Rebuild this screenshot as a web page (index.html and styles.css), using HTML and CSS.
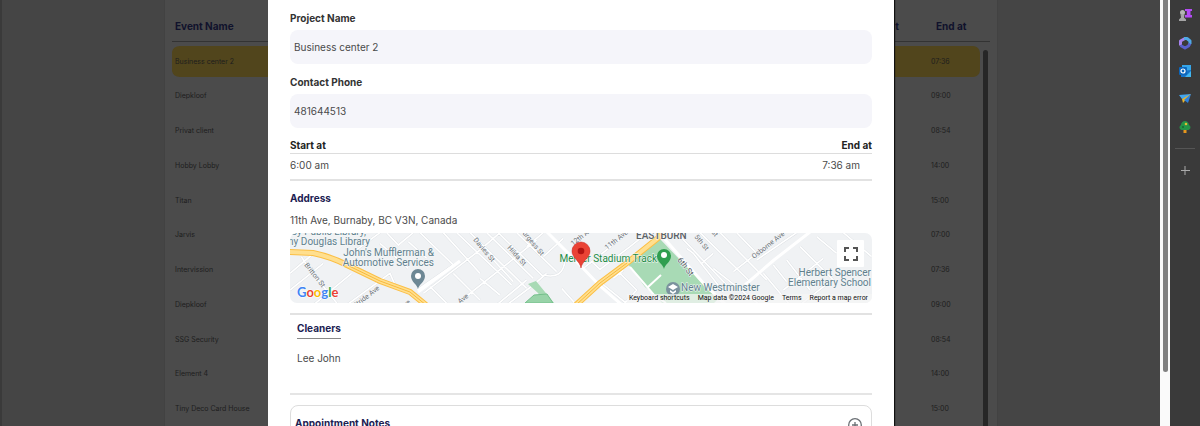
FILE: index.html
```
<!DOCTYPE html>
<html lang="en">
<head>
<meta charset="utf-8">
<title>Appointment details</title>
<link rel="stylesheet" href="styles.css">
</head>
<body>
<div class="page">
  <section class="schedule">
    <table class="events">
      <colgroup><col><col class="col-start"><col class="col-end"></colgroup>
      <thead>
        <tr><th>Event Name</th><th>Start at</th><th>End at</th></tr>
      </thead>
      <tbody>
        <tr class="selected"><td>Business center 2</td><td></td><td>07:36</td></tr>
        <tr><td>Diepkloof</td><td></td><td>09:00</td></tr>
        <tr><td>Privat client</td><td></td><td>08:54</td></tr>
        <tr><td>Hobby Lobby</td><td></td><td>14:00</td></tr>
        <tr><td>Titan</td><td></td><td>15:00</td></tr>
        <tr><td>Jarvis</td><td></td><td>07:00</td></tr>
        <tr><td>Intervission</td><td></td><td>07:36</td></tr>
        <tr><td>Diepkloof</td><td></td><td>09:00</td></tr>
        <tr><td>SSG Security</td><td></td><td>08:54</td></tr>
        <tr><td>Element 4</td><td></td><td>14:00</td></tr>
        <tr><td>Tiny Deco Card House</td><td></td><td>15:00</td></tr>
      </tbody>
    </table>
    <div class="list-scroll"></div>
  </section>

  <div class="overlay">
    <main class="modal">
      <label class="label" for="project">Project Name</label>
      <input class="field" id="project" type="text" value="Business center 2" readonly>
      <label class="label" for="phone">Contact Phone</label>
      <input class="field" id="phone" type="text" value="481644513" readonly>

      <div class="times-head"><span>Start at</span><span>End at</span></div>
      <div class="times"><span>6:00 am</span><span>7:36 am</span></div>

      <section class="address">
        <h2 class="title">Address</h2>
        <p class="text">11th Ave, Burnaby, BC V3N, Canada</p>
        <div class="map">
          <svg class="map-canvas" viewBox="0 0 582 70" preserveAspectRatio="xMidYMid slice" role="img" aria-label="Map">
            <defs>
              <g id="streets-west" transform="translate(-10 -23) scale(.33333)">
                <path d="M30 190L95 135M30 240L130 160M64 140L90 180L175 285M100 285L215 190M200 285L330 190L345 225M300 68L215 130M320 68L355 105L400 68M300 100L385 175M385 95L440 145M420 68L520 165L412 240M490 68L600 190M530 68L695 225M570 68L740 235M430 250L600 120L660 68M450 230L500 280M520 190L600 270M545 270L690 155L770 90M600 205L660 255M640 150L700 215M650 285L740 210M680 285L760 225L800 190M620 68L760 205M655 68L790 200M710 68L830 185M740 110L790 68M790 140L850 85M790 195Q850 210 855 150M845 235L885 280"/>
              </g>
              <g id="streets-east" transform="translate(280 -23) scale(.33333)">
                <path d="M40 175L65 155L90 178L180 110L230 70M60 160L165 75M95 220L175 285M140 180L200 240L160 285M130 205L160 180M320 68L470 225M350 115L370 130L460 245M390 68L535 210M450 68L590 210M500 68L560 130M395 160L430 130M490 185L640 68M560 150L680 68M610 165L650 215M640 240L760 145M650 150L720 240M690 110L800 220M740 80L800 130M430 175L570 285M580 190L660 285M690 285L780 215M820 68L905 140"/>
              </g>
            </defs>
            <rect width="582" height="70" fill="#f0f2f4"/>
            <g class="casing"><use href="#streets-west"/><use href="#streets-east"/></g>
            <g class="streets"><use href="#streets-west"/><use href="#streets-east"/></g>
            <path d="M338 31L370 6L415 53L430 64L424 70H372L364 61L355 54Z" fill="#a8dab5"/>
            <path d="M358 54L371 42M340 34L364 62L376 70" stroke="#fff" stroke-width="2" fill="none"/>
            <path d="M238 51L246 48L264 70H254L248 60Z" fill="#a8dab5"/>
            <path d="M235 70L244 62L257 61L263 70Z" fill="#98d3a8" stroke="#74bf8b" stroke-width="1"/>
            <path d="M257 -1L290 32L309 52L332 72M373 4L415 52L436 72M455 52L484 27L520 -1M128 59L170 28" stroke="#fff" stroke-width="3" fill="none"/>
            <g fill="none">
              <path d="M-2 19L23 20Q42 24 57 32L90 48L120 59L136 72M286 72L310 50L337 30L368 5L374 -2" stroke="#fbbf45" stroke-width="6"/>
              <path d="M-2 19L23 20Q42 24 57 32L90 48L120 59L136 72M286 72L310 50L337 30L368 5L374 -2" stroke="#ffdf8f" stroke-width="4"/>
              <path d="M57 32L90 48L120 59L136 72M286 72L310 50L337 30" stroke="#f7b93c" stroke-width="1"/>
            </g>
            <g class="road">
              <text transform="translate(14 32) rotate(52)">Britton St</text>
              <text transform="translate(183 7) rotate(50)">Davies St</text>
              <text transform="translate(217 15) rotate(48)">Hilda St</text>
              <text transform="translate(251 23) rotate(50)" text-anchor="end">Burgess St</text>
              <text transform="translate(283 13) rotate(-38)">12th Ave</text>
              <text transform="translate(90 56) rotate(-38)" text-anchor="end">Stride Ave</text>
              <text transform="translate(170 71) rotate(-38)">Ave</text>
              <text transform="translate(121 70) rotate(-38)" text-anchor="end">19th Ave</text>
              <text transform="translate(317 17) rotate(-38)">11th Ave</text>
              <text transform="translate(404 4) rotate(50)">5th St</text>
              <text transform="translate(425 4) rotate(50)" text-anchor="end">4th St</text>
              <text transform="translate(464 26) rotate(-38)">Osborne Ave</text>
              <text class="major" transform="translate(387 27) rotate(52)">6th St</text>
            </g>
            <g class="place">
              <text x="76" y="2" text-anchor="end">Burnaby Public Library,</text>
              <text x="80" y="12" text-anchor="end">Tommy Douglas Library</text>
              <text x="144" y="23" text-anchor="end">John's Mufflerman &amp;</text>
              <text x="144" y="33" text-anchor="end">Automotive Services</text>
              <text x="391" y="58">New Westminster</text>
              <text x="581" y="43" text-anchor="end">Herbert Spencer</text>
              <text x="581" y="53" text-anchor="end">Elementary School</text>
            </g>
            <text class="district" x="346" y="6">EASTBURN</text>
            <text class="park" x="367" y="29" text-anchor="end">Mercer Stadium Track</text>
            <path d="M128 56C127 51 121 49 121 43A7 7 0 0 1 135 43C135 49 129 51 128 56Z" fill="#6d8794"/>
            <circle cx="128" cy="43" r="3" fill="#fff"/>
            <path d="M374 36C373 31 367 29 367 23A7 7 0 0 1 381 23C381 29 375 31 374 36Z" fill="#2f9e4f"/>
            <circle cx="374" cy="22" r="3" fill="#fff"/>
            <circle cx="383" cy="56" r="7" fill="#7b929e"/>
            <path d="M378 54L383 51L388 54L383 57ZM380 57L383 59L386 57V59L383 61L380 59Z" fill="#fff"/>
            <path d="M291 35C290 28 282 25 282 18A9 9 0 0 1 300 18C300 25 292 28 291 35Z" fill="#ea4335" stroke="#c5221f" stroke-width=".5"/>
            <circle cx="291" cy="18" r="3.3" fill="#b31412"/>
            <text class="logo" x="7" y="64"><tspan fill="#4285f4">G</tspan><tspan fill="#ea4335">o</tspan><tspan fill="#fbbc04">o</tspan><tspan fill="#4285f4">g</tspan><tspan fill="#34a853">l</tspan><tspan fill="#ea4335">e</tspan></text>
          </svg>
          <button class="fullscreen" type="button" aria-label="Toggle fullscreen">
            <svg width="14" height="14" viewBox="0 0 14 14"><path d="M1 5V1H5M9 1H13V5M13 9V13H9M5 13H1V9" fill="none" stroke="#555" stroke-width="2"/></svg>
          </button>
          <div class="credits">
            <button type="button">Keyboard shortcuts</button>
            <span>Map data ©2024 Google</span>
            <a href="#terms">Terms</a>
            <a href="#report">Report a map error</a>
          </div>
        </div>
      </section>

      <section class="cleaners">
        <h2 class="title underlined">Cleaners</h2>
        <p class="text">Lee John</p>
      </section>

      <section class="notes">
        <h2 class="title">Appointment Notes</h2>
        <button class="add" type="button" aria-label="Add note">
          <svg width="16" height="16" viewBox="0 0 16 16" fill="none" stroke="#6b7075"><circle cx="8" cy="8" r="6.3" stroke-width="1.3"/><path d="M8 5V11M5 8H11" stroke-width="1.3"/></svg>
        </button>
      </section>
    </main>
  </div>
</div>

<div class="page-scroll"><div class="thumb"></div></div>

<aside class="apps">
  <button type="button" aria-label="Games"><svg viewBox="0 0 14 14"><path d="M7 1H14V3H12.500V7H14V9.500H7V7H8.800V3H7Z" fill="#b44cf5"/><circle cx="4.500" cy="4.500" r="2.500" fill="#b5b5b5"/><path d="M2.500 6.500H6.500L6 9.500L8 11.500V13H1V11.500L3 9.500Z" fill="#a5a5a5"/></svg></button>
  <button type="button" aria-label="Microsoft 365"><svg viewBox="0 0 14 14"><path d="M2.500 9.500V5L7 2.500" fill="none" stroke="#a783ee" stroke-width="3" stroke-linejoin="round"/><path d="M6 2.500H9L12 5V8" fill="none" stroke="#4fa9e6" stroke-width="3" stroke-linejoin="round"/><path d="M12 7.500L10.500 10L7 12L2.500 9.500" fill="none" stroke="#5960cc" stroke-width="3" stroke-linejoin="round"/></svg></button>
  <button type="button" aria-label="Outlook"><svg viewBox="0 0 14 14"><path d="M4 1H13V8H4Z" fill="#35a5e8"/><path d="M3 7L13 6V13H3Z" fill="#1673c9"/><path d="M13 7L7 13H13Z" fill="#42b7f1"/><rect x="1" y="3" width="8" height="8" rx="1" fill="#0b66bd"/><circle cx="5" cy="7" r="2" fill="none" stroke="#fff" stroke-width="1.200"/></svg></button>
  <button type="button" aria-label="Drop"><svg viewBox="0 0 14 14"><path d="M1 3L13 2L9 6L4 7Z" fill="#43a6ef"/><path d="M13 2L4 7L5 11Z" fill="#e9b52f"/><path d="M13 2L6 8L10 11Z" fill="#2d82df"/></svg></button>
  <button type="button" aria-label="E-tree"><svg viewBox="0 0 14 14"><path d="M5.500 9H8.500V13H5.500Z" fill="#e6961d"/><path d="M7 1C10 1 11 4 11 5C14 7 12 10.500 9 10H5C2 10.500 0 7 3 5C3 4 4 1 7 1Z" fill="#249447"/><circle cx="8" cy="4" r="1.300" fill="#e1bd32"/><circle cx="5" cy="7" r="1" fill="#126b32"/></svg></button>
  <hr>
  <button type="button" aria-label="Add app"><svg viewBox="0 0 14 14"><path d="M7 3V12M3 7.500H12" stroke="#aaa" stroke-width="1"/></svg></button>
</aside>
</body>
</html>
```
FILE: styles.css
```
* { box-sizing: border-box; }

body {
  margin: 0;
  height: 100vh;
  display: flex;
  overflow: hidden;
  background: #454545;
  color: #4a4a4a;
  font: 10px/16px Inter, "Liberation Sans", sans-serif;
}

h2, p { margin: 0; font-size: 10px; }
button { padding: 0; border: 0; background: none; font: inherit; color: inherit; }
svg { display: block; }

/* Dimmed schedule behind the dialog */
.page {
  position: relative;
  flex: 1;
  overflow: hidden;
  border-left: 2px solid #3a3a3a;
}

.schedule {
  position: relative;
  max-width: 834px;
  margin: 0 auto;
  padding: 10px 7px;
  background: #4b4b4b;
  border: solid #424242;
  border-width: 0 1px;
}

.events {
  width: 100%;
  table-layout: fixed;
  border-spacing: 0;
  text-align: left;
  color: #1d1d1d;
  font-size: 7px;
  line-height: 12px;
}

.col-start { width: 60px; }
.col-end { width: 70px; }

.events th {
  height: 32px;
  padding: 0 3px;
  border-bottom: 1px solid #333;
  color: #10122c;
  font-size: 10px;
}

.events th:last-child { padding-left: 16px; }

.events tbody::before { content: ""; display: block; height: 2px; }

.events td {
  height: 35px;
  padding: 0 3px;
  border: solid transparent;
  border-width: 2px 0;
  background-clip: padding-box;
}

.events tr:nth-child(4n + 2) td { height: 34px; }
.events td:last-child { padding-left: 11px; border-right-width: 10px; }
.selected td { background-color: #51451c; }
.selected td:first-child { border-radius: 8px 0 0 8px; }
.selected td:last-child { border-radius: 0 17px 17px 0 / 0 9px 9px 0; }

.list-scroll {
  position: absolute;
  top: 50px;
  right: 9px;
  bottom: 0;
  width: 5px;
  border-radius: 3px;
  background: #262626;
}

/* Dialog */
.overlay {
  position: absolute;
  inset: 0;
  display: flex;
  justify-content: center;
  align-items: flex-start;
}

.modal {
  width: 100%;
  max-width: 626px;
  min-height: 100%;
  padding: 10px 22px;
  background: #fff;
  box-shadow: 1px 0 1px #111;
}

.label { display: block; color: #333; font-weight: 700; }

.field {
  display: block;
  width: 100%;
  height: 34px;
  margin: 4px 0 10px;
  padding: 0 4px;
  border: 0;
  border-radius: 8px;
  outline: 0;
  background: #f5f5fa;
  color: #4a4a4a;
  font: inherit;
}

.times-head, .times { display: flex; justify-content: space-between; }
.times-head { border-bottom: 1px solid #ddd; color: #222; font-weight: 700; line-height: 15px; }
.times { padding: 3px 12px 6px 0; border-bottom: 2px solid #e2e2e2; }

.title { color: #1c2152; font-weight: 700; }

.address {
  display: flex;
  flex-direction: column;
  padding: 9px 0 10px;
  border-bottom: 2px solid #e2e2e2;
}

.address .text { margin: 6px 0 5px; }

.map {
  position: relative;
  height: 70px;
  overflow: hidden;
  border-radius: 7px;
  font-family: Roboto, sans-serif;
}

.map-canvas { width: 100%; height: 100%; }
.casing, .streets { fill: none; }
.casing { stroke: #d9dde1; stroke-width: 7px; }
.streets { stroke: #fff; stroke-width: 5px; }

.map text { paint-order: stroke; stroke: #f6f8f9; stroke-width: 1px; font-size: 10px; }
.map .road text { fill: #6a7076; font-size: 7px; }
.map .road .major { fill: #50565b; font-size: 8px; }
.place { fill: #607f8d; }
.district { fill: #5c6267; font-weight: 500; }
.park { fill: #238b45; }
.map .logo { font-family: Lato, sans-serif; font-size: 13px; font-weight: 700; stroke: #fff; }

.fullscreen {
  position: absolute;
  top: 7px;
  right: 8px;
  width: 27px;
  height: 27px;
  display: grid;
  place-items: center;
  border-radius: 1px;
  background: #fff;
}

.credits {
  position: absolute;
  right: 0;
  bottom: 0;
  display: flex;
  gap: 8px;
  padding: 0 4px 0 2px;
  background: #f5f5f5b8;
  color: #111;
  font-size: 7px;
  line-height: 9px;
}

.credits a { color: inherit; text-decoration: none; }

.cleaners {
  display: flex;
  flex-direction: column;
  align-items: flex-start;
  gap: 11px;
  padding: 5px 7px 27px;
  border-bottom: 2px solid #e5e5e5;
}

.underlined { padding-bottom: 2px; border-bottom: 1px solid #888; }

.notes {
  display: flex;
  justify-content: space-between;
  align-items: flex-start;
  margin-top: 10px;
  padding: 9px 8px 60px 4px;
  border: 1px solid #ddd;
  border-radius: 8px;
}

.add { margin-top: 2px; }

/* Browser chrome on the right */
.page-scroll {
  width: 10px;
  padding: 0 2px 0 3px;
  background: #fafafa;
}

.thumb { height: 372px; border-radius: 0 0 3px 3px; background: #808080; }

.apps {
  width: 30px;
  display: flex;
  flex-direction: column;
  align-items: center;
  gap: 14px;
  padding-top: 8px;
  background: #3a3a3a;
}

.apps svg { width: 14px; height: 14px; }
.apps hr { width: 20px; margin: 0; border: 0; border-top: 1px solid #555; }
```
